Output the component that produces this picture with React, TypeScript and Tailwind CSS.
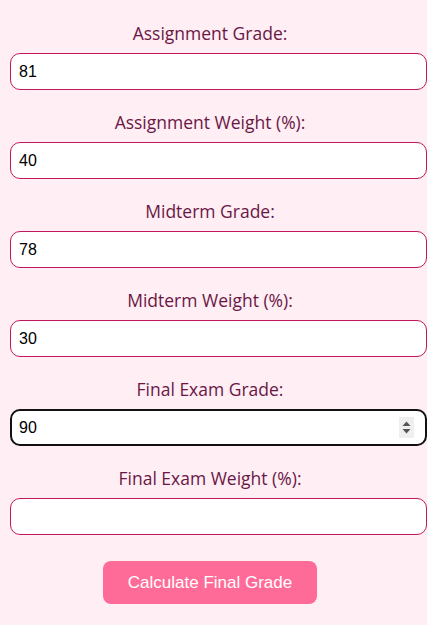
import React from "react";

const fields = [
  { label: "Assignment Grade:", value: "81" },
  { label: "Assignment Weight (%):", value: "40" },
  { label: "Midterm Grade:", value: "78" },
  { label: "Midterm Weight (%):", value: "30" },
  { label: "Final Exam Grade:", value: "90", focused: true },
  { label: "Final Exam Weight (%):", value: "" },
];

export default function App() {
  return (
    <div className="min-h-[625px] w-[427px] overflow-hidden bg-[#ffeef4]">
      <div className="w-[420px] px-[10px] pt-[21px] text-center">
        {fields.map((f, i) => (
          <div key={i} className={i === 0 ? "" : "mt-[20px]"}>
            <label
              className="block text-[17.5px] leading-[24px] text-[#6a1745] mb-[8px]"
              style={{ fontFamily: '"Open Sans", sans-serif' }}
            >
              {f.label}
            </label>
            <div className="relative w-[417px]">
              <input
                readOnly
                value={f.value}
                className={
                  "block w-[417px] h-[37px] rounded-[10px] bg-white px-[8px] text-left text-[16px] text-black outline-none " +
                  (f.focused ? "border-2 border-[#111] pl-[7px]" : "border border-[#c2185b]")
                }
                style={{ fontFamily: '"Liberation Sans", Arial, sans-serif' }}
              />
              {f.focused && (
                <div className="absolute right-[13px] top-[8px] flex h-[21px] w-[15px] flex-col items-center justify-center gap-[3px] bg-[#efefef]">
                  <svg width="9" height="5" viewBox="0 0 9 5">
                    <path d="M0.5 5 L4.5 0.5 L8.5 5 Z" fill="#555" />
                  </svg>
                  <svg width="9" height="5" viewBox="0 0 9 5">
                    <path d="M0.5 0 L4.5 4.5 L8.5 0 Z" fill="#555" />
                  </svg>
                </div>
              )}
            </div>
          </div>
        ))}
        <div className="mt-[26px] flex justify-center">
          <button
            className="h-[43px] w-[214px] rounded-[8px] bg-[#ff6b98] text-[17px] text-white"
            style={{ fontFamily: '"Liberation Sans", Arial, sans-serif' }}
          >
            Calculate Final Grade
          </button>
        </div>
      </div>
    </div>
  );
}
